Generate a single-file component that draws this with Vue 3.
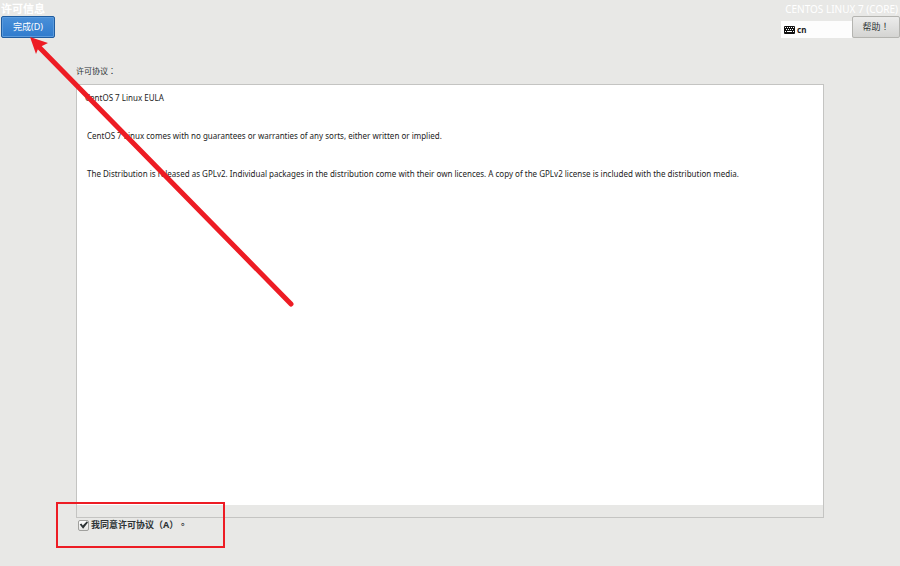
<script setup>
import { ref } from 'vue'

const accepted = ref(true)
const layout = ref('cn')
const eula = [
  'CentOS 7 Linux EULA',
  'CentOS 7 Linux comes with no guarantees or warranties of any sorts, either written or implied.',
  'The Distribution is released as GPLv2. Individual packages in the distribution come with their own licences. A copy of the GPLv2 license is included with the distribution media.',
]
</script>

<template>
  <div class="screen">
    <header class="topbar">
      <div class="side">
        <h1 class="title">许可信息</h1>
        <button type="button" class="btn done">完成(D)</button>
      </div>
      <div class="side right">
        <div class="product">CENTOS LINUX 7 (CORE)</div>
        <div class="tools">
          <div class="keyboard">
            <svg class="kb-icon" viewBox="0 0 11 8" aria-hidden="true">
              <rect width="11" height="8" rx="1" fill="#111" />
              <path d="M1 1.5h1M3 1.5h1M5 1.5h1M7 1.5h1M9 1.5h1M2 3.5h1M4 3.5h1M6 3.5h1M8 3.5h1M1 5.5h1M3 5.5h5M9 5.5h1" stroke="#fff" stroke-width="1" />
            </svg>
            <span>{{ layout }}</span>
          </div>
          <button type="button" class="btn help">帮助！</button>
        </div>
      </div>
    </header>

    <main class="content">
      <h2 class="label">许可协议：</h2>
      <section class="viewer">
        <div class="document">
          <p v-for="line in eula" :key="line">{{ line }}</p>
        </div>
      </section>
      <label class="agree">
        <input v-model="accepted" type="checkbox" />
        <span>我同意许可协议（A）。</span>
      </label>
    </main>

    <div class="highlight"></div>
    <svg class="arrow" viewBox="0 0 270 275" aria-hidden="true">
      <path d="M9 10L261 267" stroke="#ed1c24" stroke-width="5" stroke-linecap="round" />
      <path d="M0 0L18 6L12 9L8 12L6 17Z" fill="#ed1c24" />
    </svg>
  </div>
</template>

<style>
body {
  margin: 0;
  background: #e8e8e6;
}
</style>

<style scoped>
.screen {
  position: relative;
  box-sizing: border-box;
  min-height: 100vh;
  display: flex;
  flex-direction: column;
  padding-bottom: 34px;
  background: #e8e8e6;
  color: #2e3436;
  font: 9px/14px "Noto Sans", "Noto Sans CJK TC", sans-serif;
  text-spacing-trim: space-all;
}
.topbar {
  display: flex;
  justify-content: space-between;
  padding-left: 1px;
}
.side {
  display: flex;
  flex-direction: column;
  align-items: flex-start;
}
.right {
  align-items: flex-end;
}
.title {
  margin: 0;
  padding-top: 1px;
  font-size: 11px;
  line-height: 15px;
  font-weight: 700;
  color: #fff;
}
.product {
  padding: 2px 2px 0;
  font-size: 10px;
  line-height: 14px;
  color: #fff;
}
.btn {
  box-sizing: border-box;
  height: 22px;
  padding: 0;
  border: 1px solid #a8a8a4;
  border-radius: 2px;
  font: inherit;
  color: #2e3436;
}
.done {
  width: 54px;
  border-color: #1f5c9f;
  background: linear-gradient(#4a90d9, #2f7bcd);
  box-shadow: inset 0 0 0 1px #5c9bdc;
  color: #fff;
}
.help {
  width: 48px;
  border-color: #b4b4b0;
  background: linear-gradient(#ececeb, #d4d4d2);
  white-space: nowrap;
}
.tools {
  display: flex;
  align-items: flex-end;
}
.keyboard {
  box-sizing: border-box;
  width: 71px;
  height: 17px;
  display: flex;
  align-items: center;
  gap: 2px;
  padding: 1px 0 0 3px;
  background: #fdfdfd;
  color: #1c1c1c;
  font-size: 8px;
  font-weight: 700;
}
.kb-icon {
  width: 11px;
  height: 8px;
}
.content {
  flex: 1;
  display: flex;
  flex-direction: column;
  padding: 26px 76px 0;
}
.label {
  margin: 0 0 6px;
  font-size: 8px;
  line-height: 14px;
  font-weight: 400;
}
.viewer {
  flex: 1;
  display: flex;
  border: 1px solid #c4c4c2;
  padding-bottom: 12px;
}
.document {
  flex: 1;
  padding: 6px 10px;
  background: #fff;
  font-size: 8px;
}
.document p {
  margin: 0 0 24px;
  color: #1c1c1c;
}
.document p:first-child {
  margin-left: -2px;
}
.agree {
  display: flex;
  align-items: center;
  align-self: flex-start;
  gap: 2px;
  padding-left: 2px;
  font-weight: 700;
}
.agree input {
  appearance: none;
  box-sizing: border-box;
  width: 11px;
  height: 11px;
  margin: 0;
  border: 1px solid #a0a09d;
  border-radius: 2px;
  background: linear-gradient(#fff, #e4e4e2);
  display: grid;
  place-items: center;
}
.agree input:checked::before {
  content: "";
  width: 9px;
  height: 9px;
  background: #2e3436;
  clip-path: polygon(8% 45%, 26% 34%, 42% 56%, 88% 8%, 100% 22%, 46% 92%);
}
.highlight {
  position: absolute;
  left: 56px;
  bottom: 18px;
  box-sizing: border-box;
  width: 169px;
  height: 46px;
  border: 2px solid #ed1c24;
  pointer-events: none;
}
.arrow {
  position: absolute;
  left: 30px;
  top: 37px;
  width: 270px;
  height: 275px;
  pointer-events: none;
}
</style>
